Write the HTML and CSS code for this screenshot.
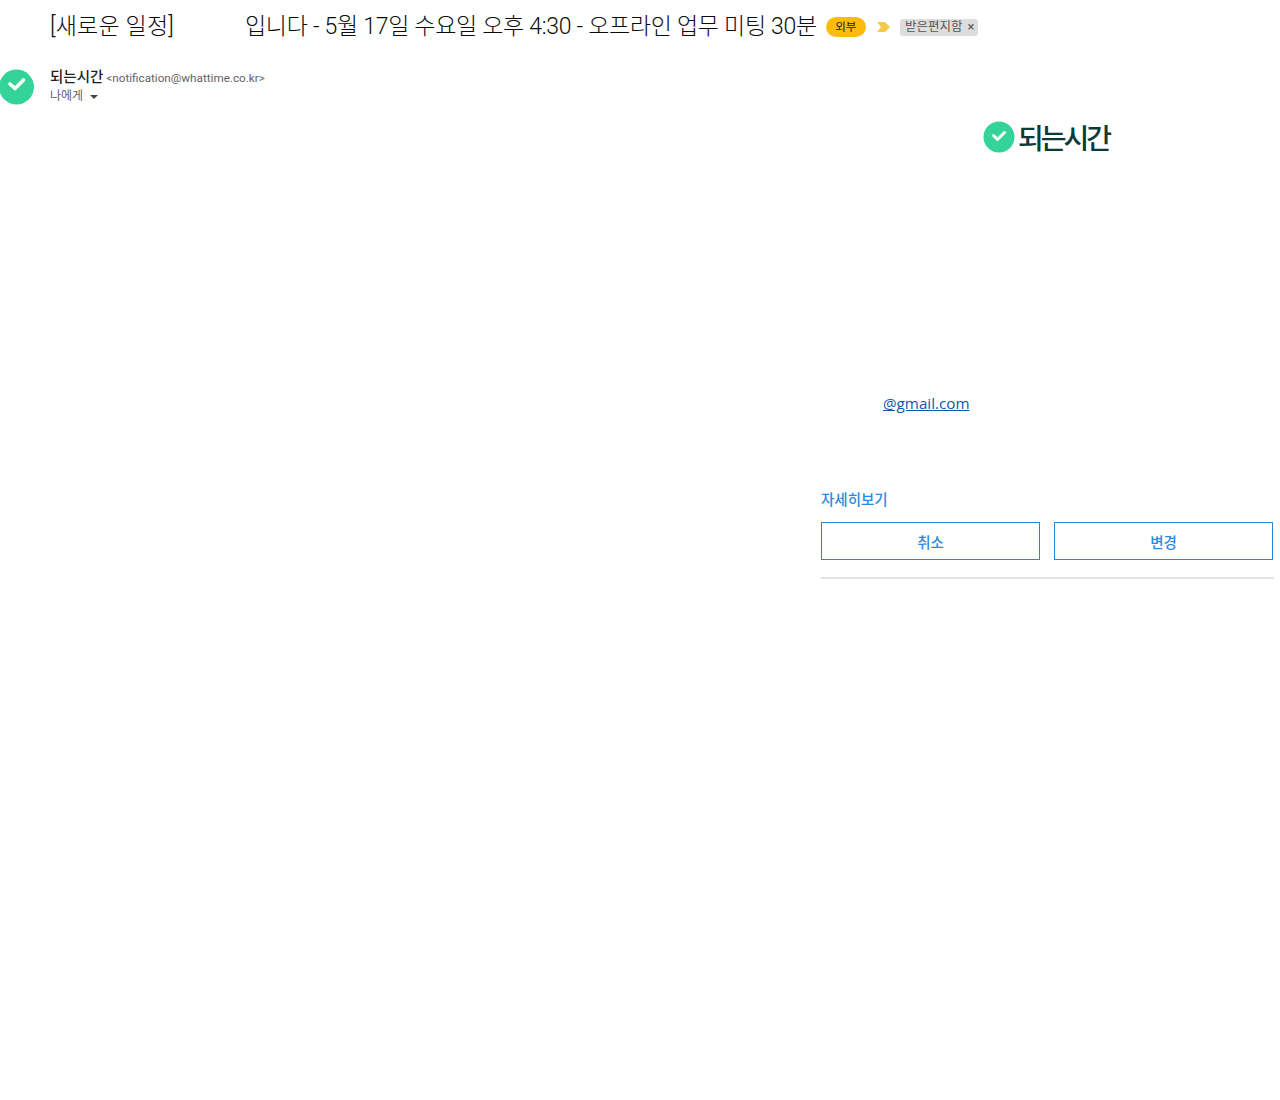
FILE: index.html
```html
<!DOCTYPE html>
<html lang="ko">
<head>
<meta charset="utf-8">
<title>새로운 일정</title>
<link rel="stylesheet" href="styles.css">
</head>
<body>
<div class="subject">
  <h1 class="title"><span class="title-a">[새로운 일정]</span><span class="title-b">입니다 - 5월 17일 수요일 오후 4:30 - 오프라인 업무 미팅 30분</span></h1>
  <span class="external">외부</span>
  <svg class="marker" width="14" height="10" viewBox="0 0 14 10"><path d="M0 0h8l5 5-5 5H0l4-5z" fill="#f7c948"/></svg>
  <span class="label">받은편지함<span class="label-x">×</span></span>
</div>
<div class="sender">
  <svg class="avatar" width="34" height="36" viewBox="0 0 34 36"><circle cx="16.500" cy="18" r="17.500" fill="#34d399"/><path d="M10 15l5 4.500 8.500-8.500" fill="none" stroke="#fff" stroke-width="3.600" stroke-linecap="round" stroke-linejoin="round"/></svg>
  <div class="sender-text">
    <div class="from"><b class="from-name">되는시간</b> <span class="from-mail">&lt;notification@whattime.co.kr&gt;</span></div>
    <div class="to">나에게<span class="caret"></span></div>
  </div>
</div>
<div class="mail">
  <div class="logo">
    <svg width="32" height="32" viewBox="0 0 32 32"><circle cx="16" cy="16" r="15.500" fill="#34d399"/><path d="M10.500 14.500l4 4 7-7" fill="none" stroke="#fff" stroke-width="3" stroke-linecap="round" stroke-linejoin="round"/></svg>
    <span class="logo-text">되는시간</span>
  </div>
  <div class="invitee"><a class="mail-link" href="#">@gmail.com</a></div>
  <a class="more" href="#">자세히보기</a>
  <div class="actions">
    <a class="action" href="#">취소</a>
    <a class="action" href="#">변경</a>
  </div>
  <hr class="rule">
</div>
</body>
</html>
```
FILE: styles.css
```css
* { box-sizing: border-box; }
html, body { margin: 0; padding: 0; background: #fff; }
body {
  width: 1280px;
  height: 1100px;
  overflow: hidden;
  font-family: Roboto, "Noto Sans CJK KR", sans-serif;
  color: #202124;
}
.subject {
  display: flex;
  align-items: center;
  height: 54px;
  padding-left: 50px;
}
.title {
  margin: 0;
  display: flex;
  font-size: 23px;
  font-weight: 300;
  line-height: 28px;
  color: #0c0c0c;
}
.title-a { width: 195px; letter-spacing: 0.200px; }
.title-b { letter-spacing: -0.290px; }
.external {
  margin-left: 9px;
  width: 40px;
  height: 20px;
  border-radius: 10px;
  background: #fdbb0c;
  font-size: 11.500px;
  line-height: 20px;
  text-align: center;
  color: #202124;
}
.marker { margin-left: 11px; }
.label {
  margin-left: 9px;
  height: 17px;
  padding: 0 4px 0 5px;
  border-radius: 3px;
  background: #dddddd;
  font-size: 12.500px;
  line-height: 16px;
  color: #555;
}
.label-x { margin-left: 5px; font-size: 13px; }
.sender {
  display: flex;
  height: 52px;
  margin-top: 15px;
}
.avatar { flex: none; }
.sender-text { margin-left: 16px; }
.from { font-size: 12px; line-height: 18px; }
.from-name { font-size: 14.500px; font-weight: 500; color: #1f1f1f; }
.from-mail { font-size: 11.700px; color: #5f6368; }
.to {
  display: flex;
  align-items: center;
  font-size: 12px;
  line-height: 18px;
  color: #5f6368;
}
.caret {
  margin-left: 7px;
  margin-top: 2px;
  border-top: 4px solid #444;
  border-left: 4.500px solid transparent;
  border-right: 4.500px solid transparent;
}
.mail {
  width: 453px;
  margin-left: 821px;
}
.logo {
  display: flex;
  justify-content: center;
  align-items: center;
  gap: 3px;
  height: 32px;
  margin-left: -3px;
}
.logo-text {
  font-size: 28px;
  font-weight: 500;
  letter-spacing: -3px;
  color: #0b3b36;
}
.invitee { margin-top: 238px; padding-left: 62px; height: 24px; }
.mail-link {
  font-family: "Open Sans", sans-serif;
  font-size: 15.200px;
  line-height: 24px;
  color: #0b57b0;
  text-decoration: underline;
}
.more {
  display: block;
  margin-top: 77px;
  font-size: 14.500px;
  font-weight: 500;
  line-height: 18px;
  color: #2b8ae0;
  text-decoration: none;
}
.actions {
  display: flex;
  gap: 14px;
  margin-top: 12px;
  padding-right: 1px;
}
.action {
  flex: 1;
  height: 38px;
  border: 1px solid #2b84d6;
  font-size: 14.500px;
  font-weight: 500;
  line-height: 41px;
  text-align: center;
  color: #2b8ae0;
  text-decoration: none;
}
.rule {
  margin: 17px 0 0;
  height: 2px;
  border: 0;
  background: #e2e2e2;
}
```
